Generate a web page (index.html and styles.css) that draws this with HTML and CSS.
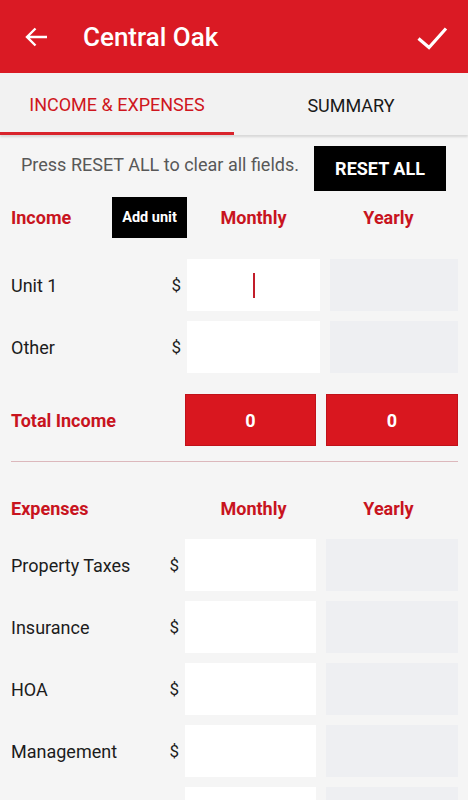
FILE: index.html
```html
<!DOCTYPE html>
<html lang="en">
  <head>
    <meta charset="UTF-8" />
    <meta name="viewport" content="width=device-width, initial-scale=1" />
    <title>Central Oak</title>
    <link rel="stylesheet" href="styles.css">
  </head>
  <body>
    <header class="appbar">
      <svg class="back" width="24" height="24" viewBox="0 0 24 24">
        <path d="M3 12H23M11.5 3.5L3 12l8.5 8.5" fill="none" stroke="#fff" stroke-width="2.4" />
      </svg>
      <h1 class="title">Central Oak</h1>
      <svg class="check" width="34" height="34" viewBox="0 0 34 34">
        <path d="M3.5 18.5L14 27.5L31 8.5" fill="none" stroke="#fff" stroke-width="3.2" />
      </svg>
    </header>

    <nav class="tabs">
      <div class="tab active">INCOME &amp; EXPENSES</div>
      <div class="tab">SUMMARY</div>
    </nav>

    <div class="reset-row">
      <span class="hint">Press RESET ALL to clear all fields.</span>
      <button class="btn reset">RESET ALL</button>
    </div>

    <section class="income">
      <div class="head-row">
        <div class="head-label">
          <span class="section-title">Income</span>
          <button class="btn add">Add unit</button>
        </div>
        <div class="head-col monthly">Monthly</div>
        <div class="head-col yearly">Yearly</div>
      </div>

      <div class="row">
        <span class="label">Unit 1</span>
        <span class="dollar">$</span>
        <div class="field"><span class="cursor"></span></div>
        <div class="field calc"></div>
      </div>
      <div class="row">
        <span class="label">Other</span>
        <span class="dollar">$</span>
        <div class="field"></div>
        <div class="field calc"></div>
      </div>

      <div class="row total">
        <span class="label section-title">Total Income</span>
        <div class="sum">0</div>
        <div class="sum">0</div>
      </div>
    </section>

    <hr class="divider" />

    <section class="expenses">
      <div class="head-row">
        <div class="head-label">
          <span class="section-title">Expenses</span>
        </div>
        <div class="head-col monthly">Monthly</div>
        <div class="head-col yearly">Yearly</div>
      </div>

      <div class="row">
        <span class="label">Property Taxes</span>
        <span class="dollar">$</span>
        <div class="field"></div>
        <div class="field calc"></div>
      </div>
      <div class="row">
        <span class="label">Insurance</span>
        <span class="dollar">$</span>
        <div class="field"></div>
        <div class="field calc"></div>
      </div>
      <div class="row">
        <span class="label">HOA</span>
        <span class="dollar">$</span>
        <div class="field"></div>
        <div class="field calc"></div>
      </div>
      <div class="row">
        <span class="label">Management</span>
        <span class="dollar">$</span>
        <div class="field"></div>
        <div class="field calc"></div>
      </div>
      <!-- next row peeks in below the fold -->
      <div class="row">
        <span class="label"></span>
        <div class="field"></div>
        <div class="field calc"></div>
      </div>
    </section>
  </body>
</html>
```

FILE: styles.css
```css
body {
  margin: 0;
  background: #f5f5f5;
  font-family: Roboto, "Liberation Sans", sans-serif;
  color: #1c1c1c;
  width: 468px;
  height: 800px;
  overflow: hidden;
}
.appbar {
  height: 73px;
  background: #da1a24;
  display: flex;
  align-items: center;
  padding: 0 19px 0 24px;
  box-sizing: border-box;
}
.title {
  margin: 0 0 0 35px;
  flex: 1;
  color: #fff;
  font-size: 26px;
  font-weight: 500;
}
.tabs {
  height: 62px;
  display: flex;
  background: #f2f2f2;
  box-shadow: 0 2px 2px rgba(0, 0, 0, 0.12);
  position: relative;
}
.tab {
  flex: 1;
  display: flex;
  align-items: center;
  justify-content: center;
  font-size: 18px;
  color: #1a1a1a;
  box-sizing: border-box;
  padding-top: 2px;
}
.tab.active {
  color: #cf1620;
  border-bottom: 3px solid #d9242c;
  padding-top: 3px;
}
.reset-row {
  display: flex;
  align-items: center;
  margin-top: 11px;
  padding: 0 22px 0 21px;
}
.hint {
  font-size: 18px;
  color: #585858;
  margin-bottom: 9px;
}
.btn {
  background: #000;
  color: #fff;
  border: none;
  font-family: inherit;
  font-weight: 700;
  padding: 0;
}
.reset {
  margin-left: auto;
  width: 132px;
  height: 45px;
  font-size: 18px;
}
.head-row {
  display: flex;
  align-items: center;
  height: 41px;
  padding: 0 11px;
}
.income .head-row {
  margin-top: 6px;
}
.expenses .head-row {
  margin-top: 26px;
}
.head-label {
  width: 176px;
  display: flex;
  align-items: center;
}
.section-title {
  color: #c8141e;
  font-weight: 700;
  font-size: 18px;
}
.income .section-title {
  width: 101px;
}
.add {
  width: 75px;
  height: 41px;
  font-size: 14.5px;
}
.head-col {
  color: #c8141e;
  font-weight: 700;
  font-size: 18px;
  text-align: center;
}
.monthly {
  width: 133px;
}
.yearly {
  width: 137px;
}
.row {
  display: flex;
  align-items: center;
  height: 52px;
  margin-top: 10px;
  padding: 0 10px 0 11px;
}
.income .head-row + .row {
  margin-top: 21px;
}
.expenses .head-row + .row {
  margin-top: 10px;
}
.label {
  flex: 1;
  font-size: 18px;
}
.dollar {
  font-size: 17px;
  margin-right: 6px;
}
.field {
  height: 52px;
  width: 131px;
  background: #fff;
  display: flex;
  align-items: center;
  justify-content: center;
}
.field.calc {
  width: 132px;
  margin-left: 10px;
  background: #eeeff2;
}
.income .field {
  width: 133px;
}
.income .field.calc {
  width: 128px;
}
.cursor {
  width: 2px;
  height: 25px;
  background: #c21d2a;
}
.row.total {
  margin-top: 21px;
}
.sum {
  width: 131px;
  height: 52px;
  box-sizing: border-box;
  background: #d9171f;
  border: 1px solid #c0121a;
  color: #fff;
  font-weight: 700;
  font-size: 18px;
  display: flex;
  align-items: center;
  justify-content: center;
}
.sum + .sum {
  width: 132px;
  margin-left: 10px;
}
.divider {
  border: none;
  height: 1px;
  background: #dcb8bc;
  margin: 15px 10px 0 11px;
}
```
